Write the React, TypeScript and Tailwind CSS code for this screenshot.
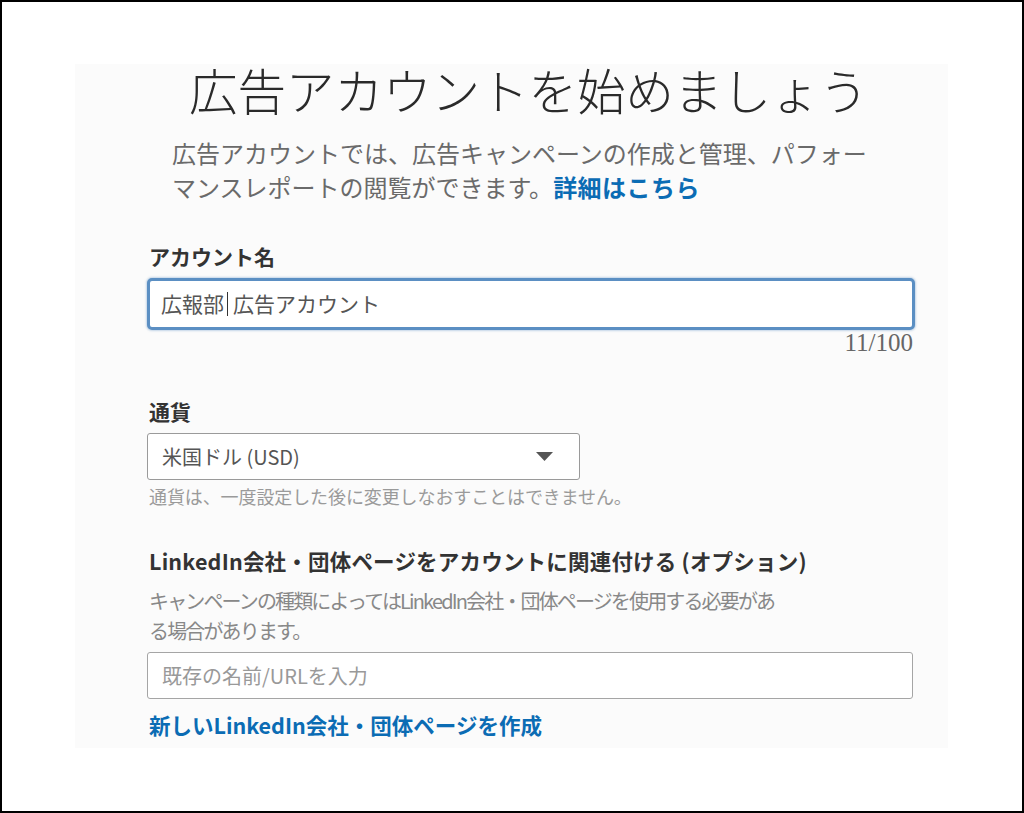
export default function App() {
  return (
    <div className="w-[1024px] h-[813px] bg-white border-2 border-black overflow-hidden font-['Noto_Sans_CJK_JP','Noto_Sans',sans-serif]">
      <div className="ml-[73px] mt-[62px] w-[873px] h-[684px] bg-[#fbfbfb] pt-px">
        <h1 className="ml-[114px] text-[48.5px] leading-[48px] font-light text-[#2a2a2a] whitespace-nowrap">
          広告アカウントを始めましょう
        </h1>
        <p className="ml-[97px] mt-[23px] text-[24px] leading-[34px] text-[#6a6a6a] whitespace-nowrap">
          広告アカウントでは、広告キャンペーンの作成と管理、パフォー
          <br />
          マンスレポートの閲覧ができます。
          <a className="font-bold text-[#0b6cb4] tracking-[0.5px]">詳細はこちら</a>
        </p>

        <div className="ml-[72px] w-[770px]">
          <label className="block mt-[38px] pl-[2px] text-[21px] leading-[28px] font-bold text-[#333]">
            アカウント名
          </label>
          <div className="mt-[8px] h-[52px] w-[768px] rounded-[5px] border-[3px] border-[#5b8fc3] bg-white shadow-[0_0_2px_1px_rgba(91,143,195,0.35)] flex items-center pl-[11px] text-[21px] text-[#555] whitespace-nowrap">
            <span>広報部</span>
            <span className="inline-block w-px h-[24px] bg-[#333] ml-[3px] mr-[5px]" />
            <span>広告アカウント</span>
          </div>
          <div className="mt-[3px] w-[766px] text-right text-[25px] leading-[20px] text-[#666] font-['Liberation_Serif',serif]">
            11/100
          </div>

          <label className="block mt-[44px] pl-[2px] text-[21px] leading-[28px] font-bold text-[#333]">
            通貨
          </label>
          <div className="mt-[8px] h-[47px] w-[433px] rounded-[3px] border border-[#9a9a9a] bg-white flex items-center justify-between pl-[14px] pr-[26px] text-[20px] text-[#555]">
            <span>米国ドル (USD)</span>
            <svg width="17" height="9" viewBox="0 0 17 9">
              <path d="M0 0h17L8.5 9z" fill="#555" />
            </svg>
          </div>
          <p className="mt-[5px] pl-[2px] text-[18px] leading-[22px] tracking-[-0.1px] text-[#9a9a9a] whitespace-nowrap">
            通貨は、一度設定した後に変更しなおすことはできません。
          </p>

          <label className="block mt-[40px] pl-[2px] text-[21.5px] leading-[28px] tracking-[0.2px] font-bold text-[#333] whitespace-nowrap">
            LinkedIn会社・団体ページをアカウントに関連付ける (オプション)
          </label>
          <p className="mt-[11px] pl-[2px] text-[20px] leading-[30px] tracking-[-1.85px] text-[#888] whitespace-nowrap">
            キャンペーンの種類によってはLinkedIn会社・団体ページを使用する必要があ
            <br />
            る場合があります。
          </p>
          <div className="mt-[6px] h-[47px] w-[766px] rounded-[3px] border border-[#a5a5a5] bg-white flex items-center pl-[14px] text-[20px] text-[#999] whitespace-nowrap">
            既存の名前/URLを入力
          </div>
          <a className="block mt-[12px] pl-[2px] text-[21.5px] leading-[28px] font-bold text-[#0b6cb4] whitespace-nowrap">
            新しいLinkedIn会社・団体ページを作成
          </a>
        </div>
      </div>
    </div>
  )
}
